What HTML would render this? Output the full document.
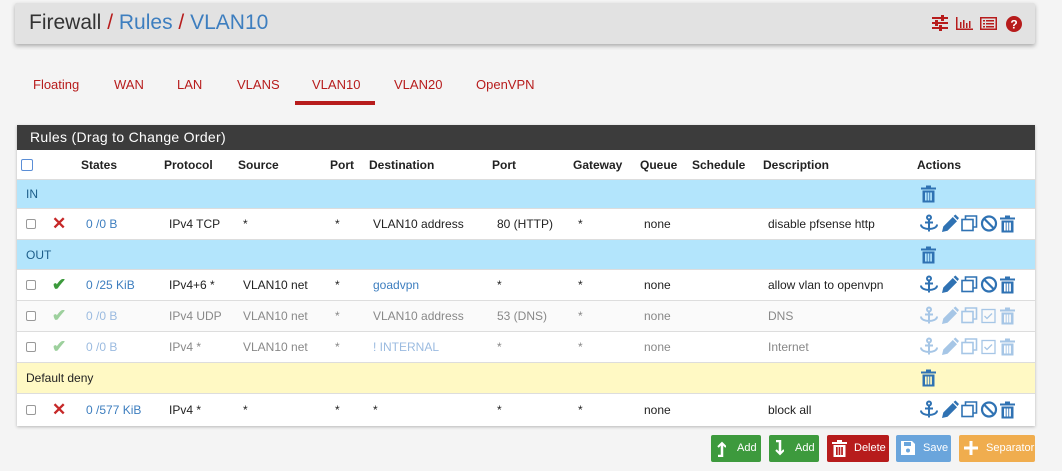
<!DOCTYPE html><html><head><style>
*{box-sizing:border-box;margin:0;padding:0}
body{width:1062px;height:471px;background:#f4f4f4;font-family:"Liberation Sans",sans-serif;position:relative;overflow:hidden;font-size:12px;color:#222}
.a{position:absolute;white-space:nowrap}
.bar{left:15px;top:3px;width:1020px;height:41px;background:#e2e2e2;box-shadow:0 2px 4px rgba(0,0,0,.3);border-radius:2px}
.tab{top:77px;color:#b71c1c;font-size:13px}
.panel{left:17px;top:125px;width:1018px;height:301px;background:#fff;box-shadow:0 1px 3px rgba(0,0,0,.25)}
.row{left:17px;width:1018px;border-bottom:1px solid #ddd}
.c{position:absolute;top:50%;transform:translateY(-50%);white-space:nowrap}
.lnk{color:#3d7ebf}
.dim{color:#888}
.cb{width:10px;height:10px;border:1px solid #999;border-radius:2px;background:#fff}
.btn{top:435px;height:27px;border-radius:2px;color:#fff;font-size:11px}
</style></head><body>
<div class="a bar"></div>
<div class="a" style="left:29px;top:11px;font-size:21px;color:#333">Firewall <span style="color:#b71c1c">/</span> <span style="color:#3d7ebf">Rules</span> <span style="color:#b71c1c">/</span> <span style="color:#3d7ebf">VLAN10</span></div>
<svg class="a" style="left:930px;top:14px" width="95" height="18" viewBox="0 0 95 18" fill="#b71c1c">
<rect x="2" y="3" width="16" height="2"/><rect x="2" y="8" width="16" height="2"/><rect x="2" y="13" width="16" height="2"/><rect x="11" y="1" width="3" height="6"/><rect x="5" y="6" width="3" height="6"/><rect x="9" y="11" width="3" height="6"/>
<path d="M26 3v13h17v-1.5H27.5V3z"/><rect x="30" y="8" width="1.5" height="6"/><rect x="33" y="6" width="1.5" height="8"/><rect x="36" y="9" width="1.5" height="5"/><rect x="39" y="7" width="1.5" height="7"/>
<path d="M50 3h17v13H50zM51.5 4.5v10h14v-10z"/><rect x="53" y="6" width="2" height="1.5"/><rect x="56" y="6" width="8" height="1.5"/><rect x="53" y="9" width="2" height="1.5"/><rect x="56" y="9" width="8" height="1.5"/><rect x="53" y="12" width="2" height="1.5"/><rect x="56" y="12" width="8" height="1.5"/>
<circle cx="84" cy="10" r="8"/><text x="84" y="14.5" font-size="12" font-weight="bold" fill="#fff" text-anchor="middle" font-family="Liberation Sans">?</text>
</svg>
<div class="a tab" style="left:33px">Floating</div>
<div class="a tab" style="left:114px">WAN</div>
<div class="a tab" style="left:177px">LAN</div>
<div class="a tab" style="left:237px">VLANS</div>
<div class="a tab" style="left:312px">VLAN10</div>
<div class="a tab" style="left:394px">VLAN20</div>
<div class="a tab" style="left:476px">OpenVPN</div>
<div class="a" style="left:295px;top:101px;width:80px;height:4px;background:#b71c1c"></div>

<div class="a panel"></div>
<div class="a" style="left:17px;top:125px;width:1018px;height:25px;background:#3c3c3c;color:#fff;font-size:14px;padding:4px 0 0 13px;letter-spacing:.3px">Rules (Drag to Change Order)</div>
<div class="a row" style="top:150px;height:30px;font-weight:bold">
<div class="c cb" style="left:4px;width:12px;height:12px;border-color:#5b8ed6"></div>
<span class="c" style="left:64px">States</span><span class="c" style="left:147px">Protocol</span><span class="c" style="left:221px">Source</span><span class="c" style="left:313px">Port</span><span class="c" style="left:352px">Destination</span><span class="c" style="left:475px">Port</span><span class="c" style="left:556px">Gateway</span><span class="c" style="left:623px">Queue</span><span class="c" style="left:675px">Schedule</span><span class="c" style="left:746px">Description</span><span class="c" style="left:900px">Actions</span></div>

<svg width="0" height="0" style="position:absolute"><defs>
<g id="tr"><rect x="0" y="2" width="15" height="2"/><rect x="5" y="0" width="5" height="2"/><path d="M1.5 5h12v12h-12zM4 7v8h1.7V7zM6.6 7v8h1.7V7zM9.2 7v8h1.7V7z" fill-rule="evenodd"/></g>
<g id="acts">
<g fill="none" stroke-width="2"><circle cx="9" cy="3" r="2"/><path d="M9 5v12M5 8h8M1 10c0 6 16 6 16 0"/></g>
<path d="M22 17.5l1.3-5.5 9.5-9.5 4.2 4.2-9.5 9.5z M33.5 1.5l2-1.5 3.5 3.5-1.5 2z" stroke="none"/>
<g fill="none" stroke-width="1.6"><rect x="42" y="5" width="11" height="11"/><path d="M45.5 5V1.5h11v11H53"/></g>
</g>
<g id="blk" fill="none" stroke-width="2.2"><circle cx="69" cy="9" r="7"/><path d="M64 4l10 10"/></g>
<g id="chk" fill="none" stroke-width="1.3"><rect x="62" y="3" width="13" height="13"/><path d="M64.5 9.5l2.5 2.5 5-5"/></g>
</defs></svg>

<!-- IN -->
<div class="a row" style="top:180px;height:29px;background:#b3e5fc;color:#1d5e8a"><span class="c" style="left:9px">IN</span>
<svg class="c" style="left:904px" width="15" height="17" fill="#2f72b3"><use href="#tr"/></svg></div>
<div class="a row" style="top:209px;height:31px">
<div class="c cb" style="left:9px"></div><span class="c" style="left:35px;color:#c62828;font-size:17px;font-weight:bold">✕</span>
<span class="c lnk" style="left:69px">0 /0 B</span><span class="c" style="left:152px">IPv4 TCP</span><span class="c" style="left:226px">*</span><span class="c" style="left:318px">*</span><span class="c" style="left:356px">VLAN10 address</span><span class="c" style="left:480px">80 (HTTP)</span><span class="c" style="left:561px">*</span><span class="c" style="left:627px">none</span><span class="c" style="left:751px">disable pfsense http</span>
<svg class="c" style="left:903px" width="100" height="19" fill="#2f72b3" stroke="#2f72b3"><use href="#acts"/><use href="#blk"/><g transform="translate(80,1)" stroke="none"><use href="#tr"/></g></svg></div>
<!-- OUT -->
<div class="a row" style="top:240px;height:30px;background:#b3e5fc;color:#1d5e8a"><span class="c" style="left:9px">OUT</span>
<svg class="c" style="left:904px" width="15" height="17" fill="#2f72b3"><use href="#tr"/></svg></div>
<div class="a row" style="top:270px;height:31px">
<div class="c cb" style="left:9px"></div><span class="c" style="left:35px;color:#3c9a3c;font-size:17px;font-weight:bold">✔</span>
<span class="c lnk" style="left:69px">0 /25 KiB</span><span class="c" style="left:152px">IPv4+6 *</span><span class="c" style="left:226px">VLAN10 net</span><span class="c" style="left:318px">*</span><span class="c lnk" style="left:356px">goadvpn</span><span class="c" style="left:480px">*</span><span class="c" style="left:561px">*</span><span class="c" style="left:627px">none</span><span class="c" style="left:751px">allow vlan to openvpn</span>
<svg class="c" style="left:903px" width="100" height="19" fill="#2f72b3" stroke="#2f72b3"><use href="#acts"/><use href="#blk"/><g transform="translate(80,1)" stroke="none"><use href="#tr"/></g></svg></div>
<div class="a row" style="top:301px;height:31px;background:#fafafa">
<div class="c cb" style="left:9px"></div><span class="c" style="left:35px;color:#9dd09d;font-size:17px;font-weight:bold">✔</span>
<span class="c" style="left:69px;color:#9bbbe0">0 /0 B</span><span class="c dim" style="left:152px">IPv4 UDP</span><span class="c dim" style="left:226px">VLAN10 net</span><span class="c dim" style="left:318px">*</span><span class="c dim" style="left:356px">VLAN10 address</span><span class="c dim" style="left:480px">53 (DNS)</span><span class="c dim" style="left:561px">*</span><span class="c dim" style="left:627px">none</span><span class="c dim" style="left:751px">DNS</span>
<svg class="c" style="left:903px" width="100" height="19" fill="#a6c6e6" stroke="#a6c6e6"><use href="#acts"/><use href="#chk"/><g transform="translate(80,1)" stroke="none"><use href="#tr"/></g></svg></div>
<div class="a row" style="top:332px;height:31px">
<div class="c cb" style="left:9px"></div><span class="c" style="left:35px;color:#9dd09d;font-size:17px;font-weight:bold">✔</span>
<span class="c" style="left:69px;color:#9bbbe0">0 /0 B</span><span class="c dim" style="left:152px">IPv4 *</span><span class="c dim" style="left:226px">VLAN10 net</span><span class="c dim" style="left:318px">*</span><span class="c" style="left:356px;color:#9bbbe0">! INTERNAL</span><span class="c dim" style="left:480px">*</span><span class="c dim" style="left:561px">*</span><span class="c dim" style="left:627px">none</span><span class="c dim" style="left:751px">Internet</span>
<svg class="c" style="left:903px" width="100" height="19" fill="#a6c6e6" stroke="#a6c6e6"><use href="#acts"/><use href="#chk"/><g transform="translate(80,1)" stroke="none"><use href="#tr"/></g></svg></div>
<!-- Default deny -->
<div class="a row" style="top:363px;height:31px;background:#fff9c4"><span class="c" style="left:9px">Default deny</span>
<svg class="c" style="left:904px" width="15" height="17" fill="#2f72b3"><use href="#tr"/></svg></div>
<div class="a row" style="top:394px;height:31px;border-bottom:none">
<div class="c cb" style="left:9px"></div><span class="c" style="left:35px;color:#c62828;font-size:17px;font-weight:bold">✕</span>
<span class="c lnk" style="left:69px">0 /577 KiB</span><span class="c" style="left:152px">IPv4 *</span><span class="c" style="left:226px">*</span><span class="c" style="left:318px">*</span><span class="c" style="left:356px">*</span><span class="c" style="left:480px">*</span><span class="c" style="left:561px">*</span><span class="c" style="left:627px">none</span><span class="c" style="left:751px">block all</span>
<svg class="c" style="left:903px" width="100" height="19" fill="#2f72b3" stroke="#2f72b3"><use href="#acts"/><use href="#blk"/><g transform="translate(80,1)" stroke="none"><use href="#tr"/></g></svg></div>

<!-- buttons -->
<div class="a btn" style="left:711px;width:50px;background:#3d9a3d"><svg class="a" style="left:5px;top:6px" width="10" height="16" fill="none" stroke="#fff" stroke-width="2.5"><path d="M2 15h4V3"/><path d="M2 6l4-4 4 4" stroke-width="2"/></svg><span class="a" style="left:26px;top:7px">Add</span></div>
<div class="a btn" style="left:769px;width:50px;background:#3d9a3d"><svg class="a" style="left:5px;top:5px" width="10" height="16" fill="none" stroke="#fff" stroke-width="2.5"><path d="M2 1h4v12"/><path d="M2 10l4 4 4-4" stroke-width="2"/></svg><span class="a" style="left:26px;top:7px">Add</span></div>
<div class="a btn" style="left:827px;width:62px;background:#b71c1c"><svg class="a" style="left:5px;top:5px" width="15" height="17" fill="#fff"><use href="#tr"/></svg><span class="a" style="left:27px;top:7px">Delete</span></div>
<div class="a btn" style="left:896px;width:55px;background:#6aa5dc"><svg class="a" style="left:5px;top:6px" width="14" height="14"><path d="M0 0h11l3 3v11H0z" fill="#fff"/><rect x="3" y="1" width="7" height="4" fill="#6aa5dc"/><circle cx="7" cy="9.5" r="2" fill="#6aa5dc"/></svg><span class="a" style="left:27px;top:7px">Save</span></div>
<div class="a btn" style="left:959px;width:76px;background:#f0ad4e"><svg class="a" style="left:5px;top:6px" width="14" height="14" fill="#fff"><rect x="5.5" y="0" width="3" height="14"/><rect x="0" y="5.5" width="14" height="3"/></svg><span class="a" style="left:27px;top:7px">Separator</span></div>
</body></html>
